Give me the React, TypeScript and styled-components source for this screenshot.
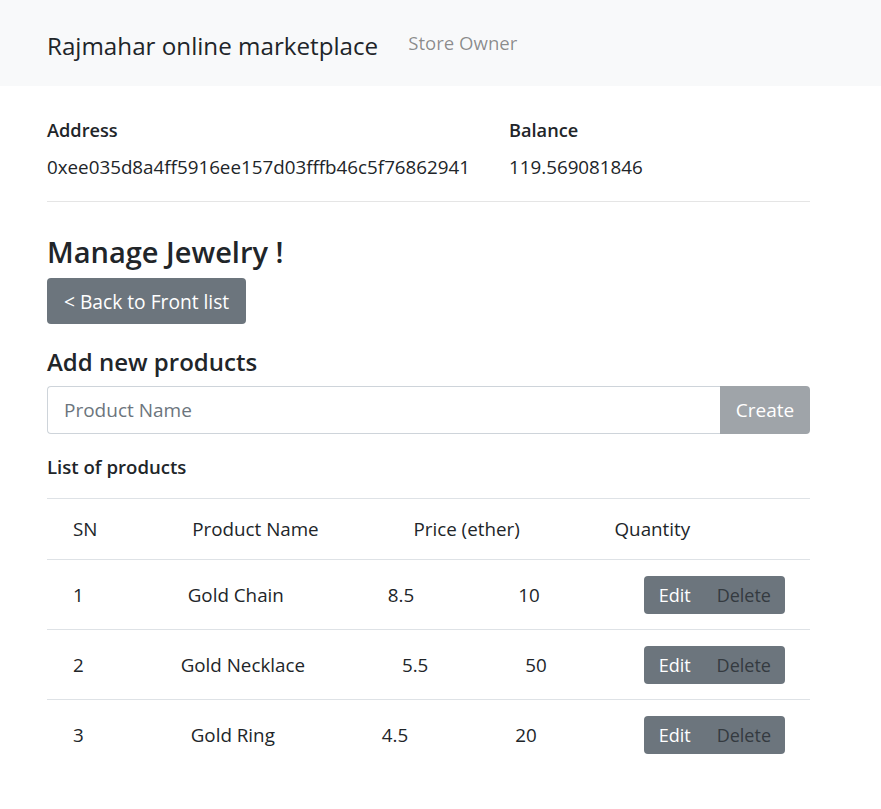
import React from "react";
import styled, { createGlobalStyle } from "styled-components";

const Global = createGlobalStyle`
  html, body { margin: 0; padding: 0; background: #fff; }
  body {
    font-family: "Open Sans", "Noto Sans", "Liberation Sans", sans-serif;
    color: #212529;
    font-size: 18.8px;
  }
  * { box-sizing: border-box; }
`;

const Navbar = styled.nav`
  height: 86px;
  background: #f8f9fa;
  display: flex;
  align-items: center;
  padding-left: 47px;
  gap: 30px;
`;

const Brand = styled.div`
  font-size: 24.2px;
  font-weight: 500;
  color: #212529;
  line-height: 1.2;
  margin-top: 6px;
`;

const NavLink = styled.div`
  font-size: 18.6px;
  color: rgba(0, 0, 0, 0.45);
  margin-top: -2px;
`;

const Container = styled.main`
  width: 763px;
  margin-left: 47px;
  display: flex;
  flex-direction: column;
`;

const InfoGrid = styled.div`
  display: grid;
  grid-template-columns: 462px 1fr;
  row-gap: 11px;
  margin-top: 31px;
  line-height: 26px;
`;

const Label = styled.div`
  font-weight: 600;
  font-size: 18.2px;
`;

const Value = styled.div``;

const Rule = styled.hr`
  border: 0;
  border-top: 1px solid #e5e5e5;
  margin: 21px 0 0;
  width: 100%;
`;

const H3 = styled.h3`
  margin: 33px 0 0;
  font-size: 29px;
  font-weight: 600;
  line-height: 34px;
`;

const BackButton = styled.button`
  align-self: flex-start;
  margin-top: 9px;
  height: 46px;
  padding: 0 17px;
  border: 0;
  border-radius: 4px;
  background: #6c757d;
  color: #fff;
  font-family: inherit;
  font-size: 19.2px;
`;

const H4 = styled.h4`
  margin: 23px 0 0;
  font-size: 24px;
  font-weight: 600;
  line-height: 30px;
`;

const InputGroup = styled.div`
  display: flex;
  height: 48px;
  margin-top: 9px;
`;

const Input = styled.input`
  flex: 1;
  border: 1px solid #ced4da;
  border-right: 0;
  border-radius: 4px 0 0 4px;
  padding: 0 16px;
  font-family: inherit;
  font-size: 19px;
  color: #495057;
  &::placeholder { color: #6c757d; }
`;

const CreateButton = styled.button`
  width: 90px;
  border: 0;
  border-radius: 0 4px 4px 0;
  background: #9fa4a9;
  color: #fff;
  font-family: inherit;
  font-size: 19px;
`;

const H6 = styled.h6`
  margin: 22px 0 0;
  font-size: 18.6px;
  font-weight: 600;
  line-height: 22px;
`;

const Table = styled.div`
  margin-top: 20px;
  display: flex;
  flex-direction: column;
`;

const Row = styled.div<{ $head?: boolean }>`
  display: flex;
  justify-content: space-between;
  align-items: center;
  padding: 0 25px 0 26px;
  height: ${(p) => (p.$head ? 61 : 70)}px;
  border-top: 1px solid #dee2e6;
  line-height: 26px;
`;

const Cell = styled.div``;

const BtnGroup = styled.div`
  display: flex;
  height: 38px;
  border-radius: 4px;
  overflow: hidden;
  background: #6c757d;
`;

const GroupBtn = styled.button<{ $dark?: boolean }>`
  border: 0;
  background: transparent;
  color: ${(p) => (p.$dark ? "#343a40" : "#fff")};
  font-family: inherit;
  font-size: 18px;
  padding: ${(p) => (p.$dark ? "0 14px 0 13px" : "0 13px 0 15px")};
`;

const products = [
  { sn: 1, name: "Gold Chain", price: "8.5", qty: "10" },
  { sn: 2, name: "Gold Necklace", price: "5.5", qty: "50" },
  { sn: 3, name: "Gold Ring", price: "4.5", qty: "20" },
];

export default function App() {
  return (
    <>
      <Global />
      <Navbar>
        <Brand>Rajmahar online marketplace</Brand>
        <NavLink>Store Owner</NavLink>
      </Navbar>
      <Container>
        <InfoGrid>
          <Label>Address</Label>
          <Label>Balance</Label>
          <Value>0xee035d8a4ff5916ee157d03fffb46c5f76862941</Value>
          <Value>119.569081846</Value>
        </InfoGrid>
        <Rule />
        <H3>Manage Jewelry !</H3>
        <BackButton>&lt; Back to Front list</BackButton>
        <H4>Add new products</H4>
        <InputGroup>
          <Input placeholder="Product Name" />
          <CreateButton>Create</CreateButton>
        </InputGroup>
        <H6>List of products</H6>
        <Table>
          <Row $head>
            <Cell>SN</Cell>
            <Cell>Product Name</Cell>
            <Cell>Price (ether)</Cell>
            <Cell>Quantity</Cell>
            <Cell />
          </Row>
          {products.map((p) => (
            <Row key={p.sn}>
              <Cell>{p.sn}</Cell>
              <Cell>{p.name}</Cell>
              <Cell>{p.price}</Cell>
              <Cell>{p.qty}</Cell>
              <BtnGroup>
                <GroupBtn>Edit</GroupBtn>
                <GroupBtn $dark>Delete</GroupBtn>
              </BtnGroup>
            </Row>
          ))}
        </Table>
      </Container>
    </>
  );
}
